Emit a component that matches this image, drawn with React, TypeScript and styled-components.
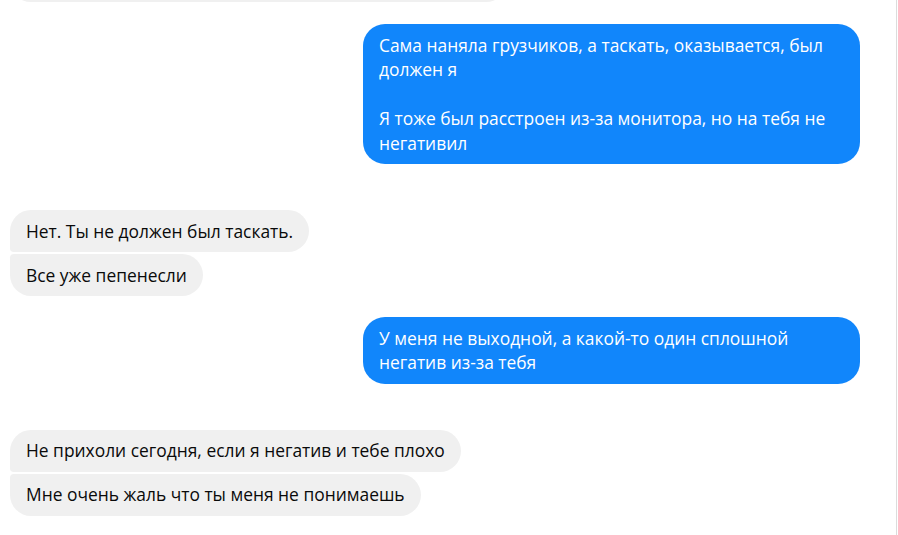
import React from 'react';
import styled, { createGlobalStyle, css } from 'styled-components';

type Pos = 'single' | 'first' | 'middle' | 'last';

interface Message {
  text: string;
}

interface Group {
  mine: boolean;
  after: number;
  messages: Message[];
}

const groups: Group[] = [
  {
    mine: true,
    after: 46,
    messages: [
      {
        text:
          'Сама наняла грузчиков, а таскать, оказывается, был должен я\n\nЯ тоже был расстроен из-за монитора, но на тебя не негативил',
      },
    ],
  },
  {
    mine: false,
    after: 21,
    messages: [{ text: 'Нет. Ты не должен был таскать.' }, { text: 'Все уже пепенесли' }],
  },
  {
    mine: true,
    after: 46,
    messages: [{ text: 'У меня не выходной, а какой-то один сплошной негатив из-за тебя' }],
  },
  {
    mine: false,
    after: 21,
    messages: [
      { text: 'Не прихоли сегодня, если я негатив и тебе плохо' },
      { text: 'Мне очень жаль что ты меня не понимаешь' },
    ],
  },
];

const positionOf = (i: number, n: number): Pos => {
  if (n === 1) return 'single';
  if (i === 0) return 'first';
  if (i === n - 1) return 'last';
  return 'middle';
};

const App: React.FC = () => {
  return (
    <>
      <GlobalStyle />
      <Thread>
        <Row $mine={false} $after={22}>
          <PartialBubble />
        </Row>
        {groups.map((g, gi) => (
          <Row key={gi} $mine={g.mine} $after={g.after}>
            {g.messages.map((m, mi) => (
              <Bubble key={mi} $mine={g.mine} $pos={positionOf(mi, g.messages.length)}>
                {m.text}
              </Bubble>
            ))}
          </Row>
        ))}
      </Thread>
    </>
  );
};

export default App;

const GlobalStyle = createGlobalStyle`
  html, body {
    margin: 0;
    padding: 0;
    background: #ffffff;
    overflow: hidden;
  }
  body {
    font-family: "Open Sans", "Noto Sans", "DejaVu Sans", sans-serif;
  }
`;

const Thread = styled.div`
  width: 897px;
  height: 535px;
  box-sizing: border-box;
  border-right: 1px solid #dcdcdc;
  padding: 0 36px 0 10px;
  overflow: hidden;
  display: flex;
  flex-direction: column;
`;

const Row = styled.div<{ $mine: boolean; $after: number }>`
  display: flex;
  flex-direction: column;
  align-items: ${p => (p.$mine ? 'flex-end' : 'flex-start')};
  gap: 2px;
  margin-bottom: ${p => p.$after}px;
  flex-shrink: 0;
`;

const big = '22px';
const small = '4px';

const corners = (mine: boolean, pos: Pos) => {
  const edgeTop = pos === 'single' || pos === 'first' ? big : small;
  const edgeBottom = pos === 'single' || pos === 'last' ? big : small;
  return mine
    ? css`
        border-radius: ${big} ${edgeTop} ${edgeBottom} ${big};
      `
    : css`
        border-radius: ${edgeTop} ${big} ${big} ${edgeBottom};
      `;
};

const Bubble = styled.div<{ $mine: boolean; $pos: Pos }>`
  max-width: 465px;
  padding: 8.75px 16px;
  font-size: 17.4px;
  line-height: 24.5px;
  white-space: pre-wrap;
  background: ${p => (p.$mine ? '#1186fb' : '#f0f0f0')};
  color: ${p => (p.$mine ? '#ffffff' : '#0a0a0a')};
  ${p => corners(p.$mine, p.$pos)}
`;

const PartialBubble = styled.div`
  width: 497px;
  height: 42px;
  margin-top: -40px;
  background: #f0f0f0;
  border-radius: ${small} ${big} ${big} ${big};
`;
